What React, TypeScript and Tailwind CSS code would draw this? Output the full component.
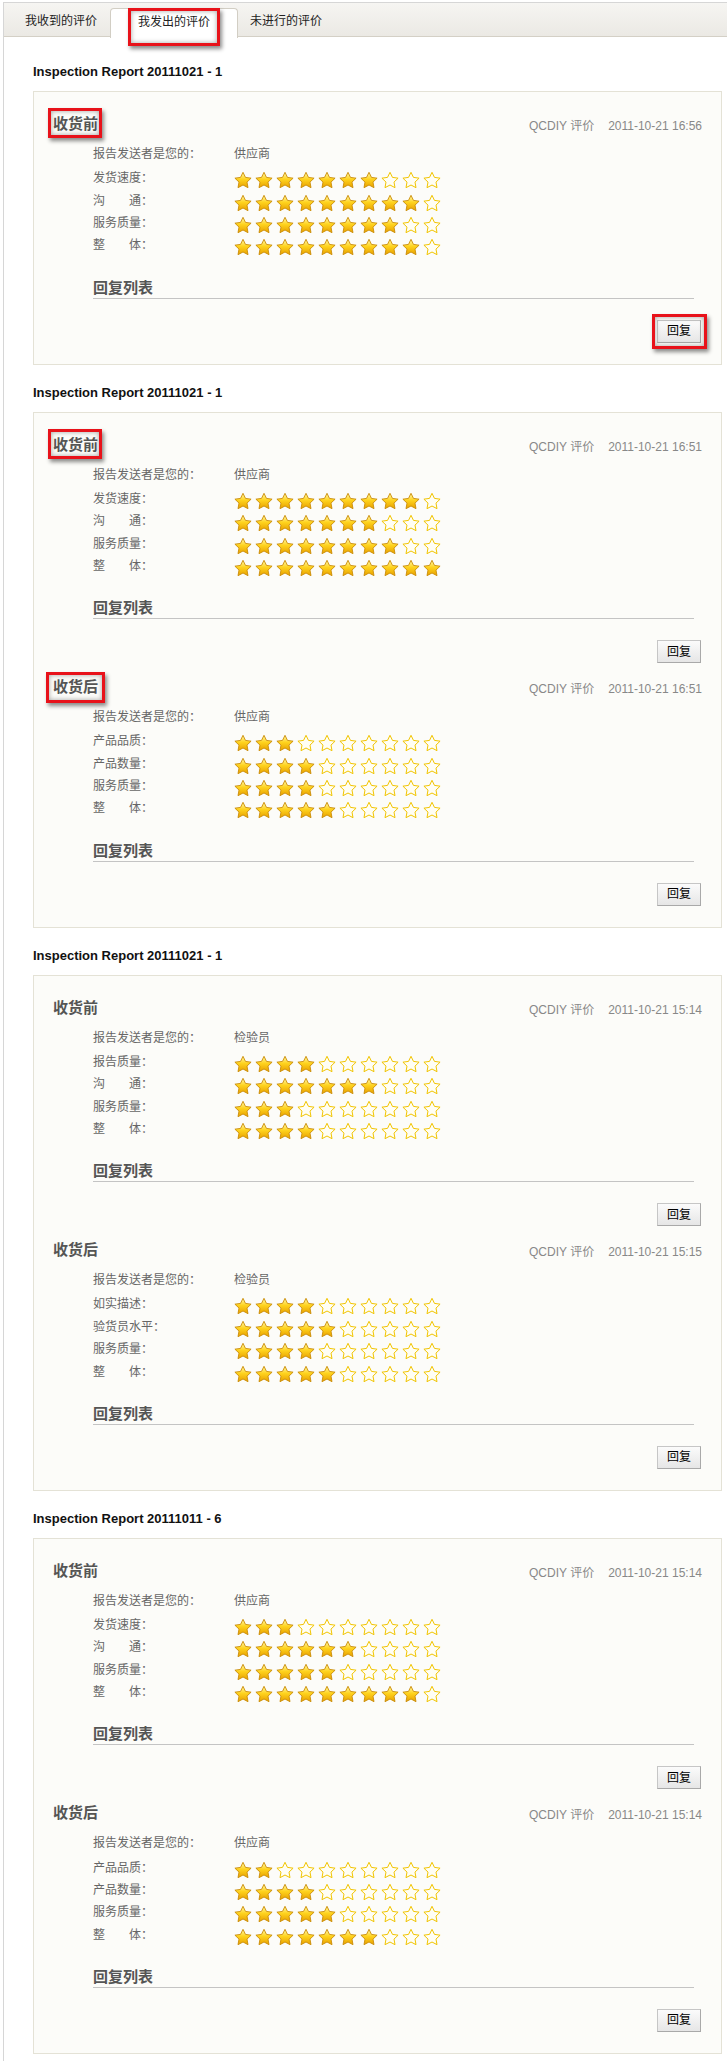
import { useId, type ReactNode } from 'react'

type Row = { label: string; score: number }
type Section = {
  title: string
  time: string
  role: string
  rows: Row[]
  titleMark?: string
  buttonMark?: string
}
type Report = { name: string; sections: Section[] }

const TITLE_MARK = '-left-[5px] -right-[4px] -top-[6px] -bottom-[4px]'
const TITLE_MARK_WIDE = '-left-[7px] -right-[7px] -top-[5px] -bottom-[6px]'
const BUTTON_MARK = '-left-[5px] -right-[6px] -top-[6px] -bottom-[6px]'

const REPORTS: Report[] = [
  {
    name: 'Inspection Report 20111021 - 1',
    sections: [
      {
        title: '收货前', time: '2011-10-21 16:56', role: '供应商', titleMark: TITLE_MARK, buttonMark: BUTTON_MARK,
        rows: [
          { label: '发货速度：', score: 7 },
          { label: '沟　　通：', score: 9 },
          { label: '服务质量：', score: 8 },
          { label: '整　　体：', score: 9 },
        ],
      },
    ],
  },
  {
    name: 'Inspection Report 20111021 - 1',
    sections: [
      {
        title: '收货前', time: '2011-10-21 16:51', role: '供应商', titleMark: TITLE_MARK,
        rows: [
          { label: '发货速度：', score: 9 },
          { label: '沟　　通：', score: 7 },
          { label: '服务质量：', score: 8 },
          { label: '整　　体：', score: 10 },
        ],
      },
      {
        title: '收货后', time: '2011-10-21 16:51', role: '供应商', titleMark: TITLE_MARK_WIDE,
        rows: [
          { label: '产品品质：', score: 3 },
          { label: '产品数量：', score: 4 },
          { label: '服务质量：', score: 4 },
          { label: '整　　体：', score: 5 },
        ],
      },
    ],
  },
  {
    name: 'Inspection Report 20111021 - 1',
    sections: [
      {
        title: '收货前', time: '2011-10-21 15:14', role: '检验员',
        rows: [
          { label: '报告质量：', score: 4 },
          { label: '沟　　通：', score: 7 },
          { label: '服务质量：', score: 3 },
          { label: '整　　体：', score: 4 },
        ],
      },
      {
        title: '收货后', time: '2011-10-21 15:15', role: '检验员',
        rows: [
          { label: '如实描述：', score: 4 },
          { label: '验货员水平：', score: 5 },
          { label: '服务质量：', score: 4 },
          { label: '整　　体：', score: 5 },
        ],
      },
    ],
  },
  {
    name: 'Inspection Report 20111011 - 6',
    sections: [
      {
        title: '收货前', time: '2011-10-21 15:14', role: '供应商',
        rows: [
          { label: '发货速度：', score: 3 },
          { label: '沟　　通：', score: 6 },
          { label: '服务质量：', score: 5 },
          { label: '整　　体：', score: 9 },
        ],
      },
      {
        title: '收货后', time: '2011-10-21 15:14', role: '供应商',
        rows: [
          { label: '产品品质：', score: 2 },
          { label: '产品数量：', score: 4 },
          { label: '服务质量：', score: 5 },
          { label: '整　　体：', score: 7 },
        ],
      },
    ],
  },
]

const STAR = 'M9 1.3 L11.47 6.4 L17.08 7.17 L12.99 11.1 L14 16.68 L9 14 L4 16.68 L5.01 11.1 L0.92 7.17 L6.53 6.4 Z'

function Star({ on }: { on: boolean }) {
  const id = useId()
  return (
    <svg width="18" height="18" viewBox="0 0 18 18" className="shrink-0">
      <defs>
        <linearGradient id={id} x1="0" y1="0" x2="0" y2="1">
          <stop offset="0" stopColor="#fff7b0" />
          <stop offset="0.45" stopColor="#ffd41e" />
          <stop offset="1" stopColor="#e8a000" />
        </linearGradient>
      </defs>
      {on ? (
        <path d={STAR} fill={`url(#${id})`} stroke="#c98b05" strokeWidth="0.9" strokeLinejoin="round" />
      ) : (
        <path d={STAR} fill="#fffef4" stroke="#f1c400" strokeWidth="1" strokeLinejoin="round" />
      )}
    </svg>
  )
}

// red annotation boxes drawn over the screenshot
function Mark({ box, children }: { box?: string; children: ReactNode }) {
  if (!box) return <>{children}</>
  return (
    <span className="relative inline-block">
      {children}
      <span className={`pointer-events-none absolute border-[3px] border-[#e8121a] shadow-[inset_0_0_5px_rgba(0,0,0,0.35),2px_3px_4px_rgba(0,0,0,0.45)] ${box}`} />
    </span>
  )
}

function EvalSection({ s }: { s: Section }) {
  return (
    <div>
      <div className="flex h-[20px] items-start justify-between">
        <Mark box={s.titleMark}>
          <span className="block text-[15px] font-bold leading-[20px] text-[#555]">{s.title}</span>
        </Mark>
        <span className="mt-[5px] text-[12px] leading-[14px] text-[#888]">
          QCDIY 评价<span className="ml-[14px]">{s.time}</span>
        </span>
      </div>

      <div className="mt-[9px] pl-[40px] text-[12px] text-[#666]">
        <div className="mb-[2px] flex h-[22px] items-center">
          <span className="w-[141px]">报告发送者是您的：</span>
          <span>{s.role}</span>
        </div>
        {s.rows.map((r, i) => (
          <div key={i} className="flex h-[22.4px] items-center">
            <span className="w-[141px] whitespace-pre">{r.label}</span>
            <div className="mt-[4px] flex gap-[3px]">
              {Array.from({ length: 10 }, (_, k) => (
                <Star key={k} on={k < r.score} />
              ))}
            </div>
          </div>
        ))}
      </div>

      <div className="ml-[40px] mr-[8px] mt-[21px] border-b border-[#c4c4c4] text-[15px] font-bold leading-[20px] text-[#555]">
        回复列表
      </div>

      <div className="mt-[21px] flex justify-end pr-px">
        <Mark box={s.buttonMark}>
          <button className="block h-[23px] w-[44px] border border-[#c6c6c6] border-b-[#a9a9a9] border-r-[#a9a9a9] bg-gradient-to-b from-[#fbfbfb] to-[#e6e6e6] text-[12px] leading-[20px] text-black">
            回复
          </button>
        </Mark>
      </div>
    </div>
  )
}

export default function App() {
  return (
    <div
      className="min-h-[2061px] bg-white pl-[3px] pt-[2px]"
      style={{ fontFamily: '"Liberation Sans", Arial, "Noto Sans CJK SC", sans-serif' }}
    >
      <div className="min-h-[2059px] border-l border-t border-[#d6d6d6]">
        <div className="flex h-[34px] border-b border-[#d4d0c6] bg-gradient-to-b from-[#f6f5f2] to-[#ebe9e4] text-[12px] text-[#222]">
          <div className="w-[106px] pl-[21px] pt-[10px] leading-[16px]">我收到的评价</div>
          <div className="-mb-px mt-[5px] flex h-[30px] w-[128px] justify-center rounded-t-[4px] border border-b-0 border-[#d2cec4] bg-white pt-[5px]">
            <Mark box="-left-[10px] -right-[10px] -top-[6px] -bottom-[8px]">
              <span className="block leading-[16px]">我发出的评价</span>
            </Mark>
          </div>
          <div className="pl-[12px] pt-[10px] leading-[16px]">未进行的评价</div>
        </div>

        <div className="pl-[29px] pr-[5px] pb-[8px]">
          {REPORTS.map((rep, i) => (
            <div key={i} className={i === 0 ? 'mt-[27px]' : 'mt-[20px]'}>
              <h2 className="text-[13px] font-bold leading-[16px] text-[#111]">{rep.name}</h2>
              <div className="mt-[11px] flex flex-col gap-[14px] border border-[#e4e2d6] bg-[#fcfcf9] px-[19px] pb-[21px] pt-[22px]">
                {rep.sections.map((s, k) => (
                  <EvalSection key={k} s={s} />
                ))}
              </div>
            </div>
          ))}
        </div>
      </div>
    </div>
  )
}
